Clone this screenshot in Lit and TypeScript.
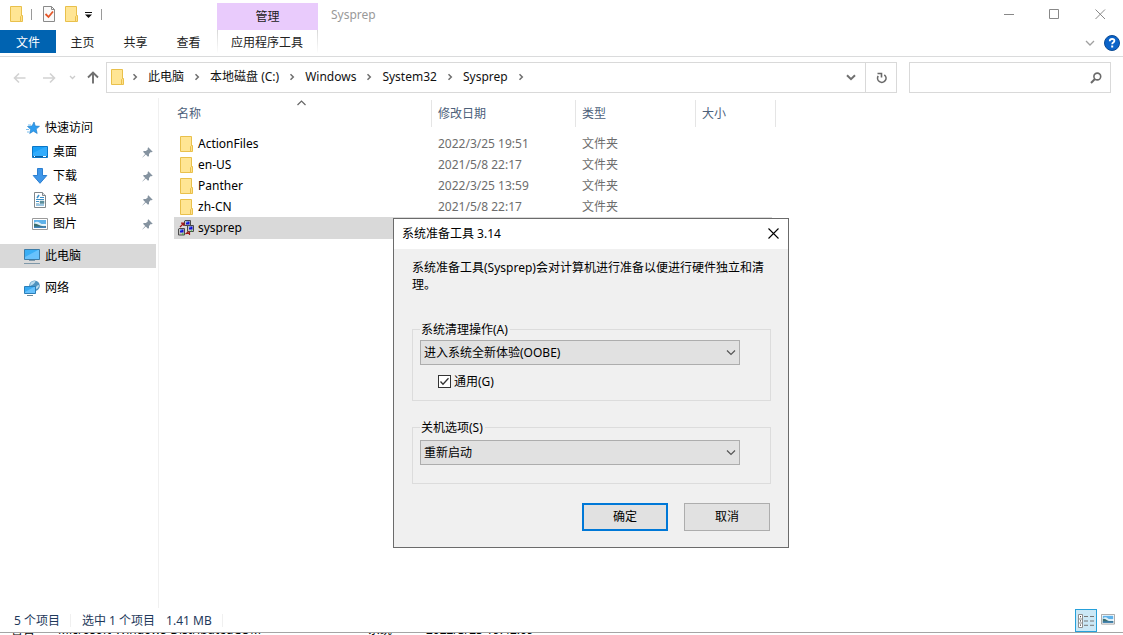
import { LitElement, html, css, svg } from "lit";
import { customElement, state } from "lit/decorators.js";
import { classMap } from "lit/directives/class-map.js";

const folderIcon = html`
  <svg class="icon" width="14" height="16" viewBox="-1 0 14 16" aria-hidden="true">
    <path d="M.5 .5h11v15H.5z" fill="#ffe594" stroke="#e9c04b" />
    <path d="M10.500 15.500v-5l1-1h1v6z" fill="#ffe08a" stroke="#e9c04b" />
  </svg>`;

const crumbChevron = html`
  <svg class="chev" width="6" height="8" viewBox="0 0 6 8" aria-hidden="true">
    <path d="M1.5 1.2L4.3 4L1.5 6.8" fill="none" stroke="#6e6e6e" stroke-width="1.5" />
  </svg>`;

const pictureShape = svg`
  <path d="M.5 2.500h15v11H.5z" fill="#fff" stroke="#9a9a9a" />
  <path d="M2 4h12v4H2z" fill="#5fb2ea" />
  <path d="M2 7q3-2.500 6 0t6 1v4H2z" fill="#dff0fa" />
  <path d="M2 7.500q3 0 5 1.500t7 1v2H2z" fill="#3d6f6d" />
  <path d="M2 10.500h12v1.500H2z" fill="#3f83bd" />`;

const sideIcons = {
  star: html`<svg class="icon" width="16" height="16" viewBox="-1 0 16 16" aria-hidden="true">
    <path d="M9 2l1.300 4 4.200.300-3.300 2.800 1 4.400-3.800-2.300L4.700 13.500l1-4.200L2.500 6.500l4.500-.500z" fill="#2f9df0" stroke="#1b78c4" stroke-width=".6" />
    <path d="M1 9.500h3M2 12h2.500M3 5h3" stroke="#7cc0ee" stroke-width="1" />
  </svg>`,
  desktop: html`<svg class="icon" width="16" height="16" viewBox="0 0 16 16" aria-hidden="true">
    <path d="M.5 2.500h15v11H.5z" fill="#19a0f7" stroke="#0b76c6" />
    <path d="M1 9L13 3h2v9H1z" fill="#42b4ff" opacity=".6" />
    <path d="M1 12.500h14" stroke="#0c5e9f" />
    <path d="M2 12.500h1M11 12.500h3" stroke="#fff" />
  </svg>`,
  download: html`<svg class="icon" width="16" height="16" viewBox="0 0 16 16" aria-hidden="true">
    <path d="M5.500 .5h5v7h4.300L8 15.300 1.200 7.500h4.300z" fill="#3f96e8" stroke="#2b7fd1" />
  </svg>`,
  doc: html`<svg class="icon" width="16" height="16" viewBox="0 0 16 16" aria-hidden="true">
    <path d="M2.500 .5h8l3 3v12h-11z" fill="#fff" stroke="#81878b" />
    <path d="M10.500 .5v3h3" fill="#dfe3e5" stroke="#81878b" />
    <path d="M4 7.500h8M8 5.500h4M4 9.500h3M4 13h8" stroke="#3b8fc8" />
    <path d="M5 6l2-3" stroke="#3b8fc8" stroke-width="1.500" />
    <path d="M8 9h4v2.500H8zM4 11.500h3" fill="#5b8e9c" stroke="#5b8e9c" stroke-width=".5" />
  </svg>`,
  picture: html`<svg class="icon" width="16" height="16" viewBox="0 0 16 16" aria-hidden="true">${pictureShape}</svg>`,
  pc: html`<svg class="icon" width="16" height="16" viewBox="0 0 16 16" aria-hidden="true">
    <path d="M.5 1.500h15v10H.5z" fill="#39aef5" stroke="#3c7ca8" />
    <path d="M1 9L14 2h1v9H1z" fill="#7ccbff" opacity=".7" />
    <path d="M5 12.500h6M0 15.500h16" stroke="#7e97a8" />
  </svg>`,
  network: html`<svg class="icon" width="16" height="16" viewBox="0 0 16 16" aria-hidden="true">
    <circle cx="10.500" cy="5.800" r="5.300" fill="#4f93bf" />
    <path d="M6.500 3q2-2.500 5-2-1 3-2.500 3.500T6 6zM12 7q1-2 3-2 0 3-3 4z" fill="#b9dcef" />
    <path d="M.5 6.500h11v7H.5z" fill="#37aaf3" stroke="#2c7fb8" />
    <path d="M1 12l9-5h1v6H1z" fill="#7ccbff" opacity=".7" />
    <path d="M3 15.500h6" stroke="#6b8796" />
  </svg>`,
};

const pinIcon = html`
  <svg class="pin" width="11" height="11" viewBox="0 0 11 11" aria-hidden="true">
    <path d="M6.300 .3L10.700 4.700 9.700 5.300 8.800 5 7 7v2L6 9.800 3.800 7.400.6 10.400.4 10.200 3.200 6.900 1 4.800 1.900 4h2l2-1.800-.3-1z" fill="#8593a0" />
  </svg>`;

const sysprepIcon = html`
  <svg class="icon" width="16" height="16" viewBox="0 0 16 16" aria-hidden="true">
    <path d="M7 .5h5.500v5H6.500v-4.500zM10 5.500h5.500v6H9.500v-5.500zM1 8.500h5.500v6.500H.5V9z" fill="#c4c4c4" stroke="#4a4a4a" />
    <path d="M8 1.500h3.500v3H8zM11 6.500h3.500v3H11zM2 9.500h3.500v3H2z" fill="#1414d8" />
    <path d="M8 1.500h1.500v1H8zM11 6.500h1.500v1H11zM2 9.500h1.500v1H2z" fill="#8fe0ff" />
    <path d="M2 7L5.500 3.500M3 3.200h2.800V6M7.500 14L11 11.500M8 13.500h4M11.500 12v3" stroke="#a01818" stroke-width="1.200" fill="none" />
    <path d="M4 14h1.500M13 11h1" stroke="#20c020" />
  </svg>`;

interface FileRow {
  name: string;
  date: string;
  type: string;
  app?: boolean;
}

const files: FileRow[] = [
  { name: "ActionFiles", date: "2022/3/25 19:51", type: "文件夹" },
  { name: "en-US", date: "2021/5/8 22:17", type: "文件夹" },
  { name: "Panther", date: "2022/3/25 13:59", type: "文件夹" },
  { name: "zh-CN", date: "2021/5/8 22:17", type: "文件夹" },
  { name: "sysprep", date: "", type: "", app: true },
];

const shared = css`
  * { box-sizing: border-box; }
  button, input, select { font: inherit; color: inherit; margin: 0; padding: 0; border: 0; border-radius: 0; background: none; }
  a { color: inherit; text-decoration: none; }
  svg { display: block; flex: none; }
`;

@customElement("explorer-ribbon")
class ExplorerRibbon extends LitElement {
  static styles = [shared, css`
    :host { display: block; border-bottom: 1px solid #dadbdc; }
    .bar { display: grid; grid-template-columns: 217px 101px 1fr auto; height: 56px; grid-template-rows: 30px 26px; }
    .quick { display: flex; align-items: center; padding: 0 0 2px 9px; }
    .rule { width: 1px; height: 11px; background: #9a9a9a; margin: 0 10px 0 8px; }
    .quick .doc { margin-right: 8px; }
    .more { width: 9px; height: 16px; margin-left: 6px; padding-top: 2px; display: grid; place-items: center; }
    .context { background: #e9cbfc; margin-top: 3px; display: grid; place-items: center; color: #222; }
    .title { padding-left: 13px; line-height: 30px; color: #999; }
    .window { display: flex; }
    .window button { width: 46px; height: 28px; display: grid; place-items: center; }
    .tabs { display: flex; align-items: flex-start; }
    .tabs button { height: 23px; width: 53px; padding-top: 2px; color: #222; }
    .tabs .file { width: 56px; background: #0063b1; color: #fff; }
    .tool { color: #222; border: 1px solid; border-width: 0 1px; border-image: linear-gradient(#d5d5d5, #fff) 1; height: 23px; }
    .tool button { width: 98px; height: 23px; padding-top: 2px; }
    .help { grid-column: 4; display: flex; justify-content: flex-end; align-items: center; gap: 9px; padding-right: 3px; }
  `];

  render() {
    return html`
      <div class="bar">
        <div class="quick">
          ${folderIcon}
          <span class="rule"></span>
          <svg class="doc" width="14" height="16" viewBox="0 0 14 16" aria-hidden="true">
            <path d="M1.500 .5h8l3 3v12h-11z" fill="#fafafa" stroke="#8a8a8a" />
            <path d="M9.500 .5v3h3" fill="none" stroke="#8a8a8a" />
            <path d="M3.500 8l3 3 4.500-5.500" fill="none" stroke="#e4572a" stroke-width="1.800" />
          </svg>
          ${folderIcon}
          <button class="more" aria-label="自定义快速访问工具栏">
            <svg width="8" height="6" viewBox="0 0 8 6"><path d="M0 0h7v1H0zM0 2.500h7L3.500 6z" fill="#111" /></svg>
          </button>
          <span class="rule"></span>
        </div>
        <div class="context">管理</div>
        <div class="title">Sysprep</div>
        <div class="window">
          <button aria-label="最小化"><svg width="11" height="11" viewBox="0 0 11 11"><path d="M1 5.500h10" stroke="#888" /></svg></button>
          <button aria-label="最大化"><svg width="11" height="11" viewBox="0 0 11 11"><path d="M.5 .5h9v9h-9z" fill="none" stroke="#888" /></svg></button>
          <button aria-label="关闭"><svg width="11" height="11" viewBox="0 0 11 11"><path d="M.5 .5l9.500 9.500M10 .5L.5 10" stroke="#888" /></svg></button>
        </div>
        <div class="tabs">
          <button class="file">文件</button>
          <button>主页</button>
          <button>共享</button>
          <button>查看</button>
        </div>
        <div class="tool"><button>应用程序工具</button></div>
        <div class="help">
          <svg width="10" height="6" viewBox="0 0 10 6" aria-hidden="true"><path d="M1 1l4 4 4-4" fill="none" stroke="#a0a0a0" stroke-width="1.300" /></svg>
          <button aria-label="帮助">
            <svg width="16" height="16" viewBox="0 0 16 16">
              <circle cx="8" cy="8" r="7.500" fill="#0a63c9" stroke="#0b4a94" />
              <path d="M5.800 6.200V5.800Q5.900 4 8.100 4q2.300 0 2.300 1.800 0 1-1.200 1.700-1 .6-1 1.700" fill="none" stroke="#fff" stroke-width="1.800" />
              <path d="M7.200 10.500h2v2h-2z" fill="#fff" />
            </svg>
          </button>
        </div>
      </div>`;
  }
}

@customElement("explorer-address")
class ExplorerAddress extends LitElement {
  static styles = [shared, css`
    :host { display: flex; align-items: center; padding: 5px 12px 5px 0; }
    .nav { display: grid; grid-template-columns: 38px 22px 24px 18px; width: 106px; justify-items: center; align-items: center; }
    .box { flex: 1; display: flex; border: 1px solid #d9d9d9; height: 31px; color: #111; }
    .crumbs { flex: 1; display: flex; align-items: center; padding: 0 0 1px 3px; }
    .crumbs > .icon { margin-right: -2px; }
    .chev { margin: 0 10px; }
    .drop { width: 28px; display: grid; place-items: center; }
    .refresh { width: 31px; border-left: 1px solid #d9d9d9; display: grid; place-items: center; }
    .search { width: 202px; margin-left: 12px; display: flex; align-items: center; border: 1px solid #d9d9d9; height: 31px; padding-right: 8px; }
    .search input { flex: 1; min-width: 0; height: 29px; padding-left: 8px; outline: 0; }
  `];

  render() {
    const crumbs = ["此电脑", "本地磁盘 (C:)", "Windows", "System32", "Sysprep"];
    return html`
      <div class="nav">
        <button aria-label="返回"><svg width="13" height="12" viewBox="0 0 13 12"><path d="M12.500 6H1.500M6 1.500L1.500 6 6 10.500" fill="none" stroke="#d2d2d2" stroke-width="1.600" /></svg></button>
        <button aria-label="前进"><svg width="13" height="12" viewBox="0 0 13 12"><path d="M0 6h11.500M7 1.500L11.500 6 7 10.500" fill="none" stroke="#d2d2d2" stroke-width="1.600" /></svg></button>
        <button aria-label="最近浏览的位置"><svg width="7" height="5" viewBox="0 0 7 5"><path d="M1 1l2.500 2.500L6 1" fill="none" stroke="#ccc" stroke-width="1.300" /></svg></button>
        <button aria-label="上移"><svg width="12" height="13" viewBox="0 0 12 13"><path d="M6 12.500V2M1 6.500L6 1.500l5 5" fill="none" stroke="#707070" stroke-width="1.900" /></svg></button>
      </div>
      <div class="box">
        <nav class="crumbs" aria-label="地址">
          ${folderIcon}${crumbChevron}
          ${crumbs.map((c) => html`<a href="#">${c}</a>${crumbChevron}`)}
        </nav>
        <button class="drop" aria-label="以前的位置"><svg width="10" height="7" viewBox="0 0 10 7"><path d="M1 1.200l4 4 4-4" fill="none" stroke="#707070" stroke-width="2" /></svg></button>
        <button class="refresh" aria-label="刷新"><svg width="11" height="12" viewBox="0 0 11 12"><path d="M8.300 2.800A4.200 4.200 0 1 1 2.200 4M1.500 1.500h4V5.500" fill="none" stroke="#6a6a6a" stroke-width="1.600" /></svg></button>
      </div>
      <div class="search">
        <input type="search" aria-label="搜索 Sysprep" />
        <svg width="12" height="12" viewBox="0 0 12 12" aria-hidden="true"><circle cx="7.300" cy="4.500" r="3.400" fill="none" stroke="#6a6a6a" stroke-width="1.600" /><path d="M4.900 7L1 11" stroke="#6a6a6a" stroke-width="2" /></svg>
      </div>`;
  }
}

@customElement("explorer-sidebar")
class ExplorerSidebar extends LitElement {
  static styles = [shared, css`
    :host { display: flex; flex-direction: column; gap: 8px; width: 159px; padding: 18px 2px 0 0; border-right: 1px solid #f0f0f0; }
    .row { display: flex; align-items: center; gap: 5px; height: 24px; padding: 0 3px 0 24px; color: #000; }
    .sub { padding-left: 32px; }
    .current { background: #d9d9d9; }
    .pin { margin-left: auto; }
  `];

  render() {
    const quick: [keyof typeof sideIcons, string][] = [
      ["desktop", "桌面"],
      ["download", "下载"],
      ["doc", "文档"],
      ["picture", "图片"],
    ];
    return html`
      <div>
        <a class="row" href="#">${sideIcons.star}<span>快速访问</span></a>
        ${quick.map(([icon, label]) => html`<a class="row sub" href="#">${sideIcons[icon]}<span>${label}</span>${pinIcon}</a>`)}
      </div>
      <a class="row current" href="#">${sideIcons.pc}<span>此电脑</span></a>
      <a class="row" href="#">${sideIcons.network}<span>网络</span></a>`;
  }
}

@customElement("explorer-files")
class ExplorerFiles extends LitElement {
  static styles = [shared, css`
    :host { display: block; padding: 2px 0 0 15px; }
    table { border-collapse: separate; border-spacing: 0; table-layout: fixed; width: 602px; }
    .c-name { width: 258px; }
    .c-date { width: 144px; }
    .c-type { width: 120px; }
    .c-size { width: 80px; }
    th { position: relative; height: 27px; padding: 0 0 0 6px; text-align: left; font-weight: 400; color: #4c607a; border-right: 1px solid #e5e5e5; }
    th:first-child { padding-left: 3px; }
    .sort { position: absolute; top: 0; left: calc(50% - 6px); }
    .gap td { height: 6px; }
    td { height: 21px; padding: 0 0 0 6px; color: #6d6d6d; white-space: nowrap; }
    td:first-child { padding-left: 4px; color: #000; }
    .name { display: flex; align-items: center; gap: 4px; }
    .name .icon { width: 16px; }
    .selected td { height: 22px; background: #d9d9d9; }
    .selected td:last-child { border-right: 4px solid transparent; background-clip: padding-box; }
  `];

  render() {
    return html`
      <table>
        <colgroup><col class="c-name" /><col class="c-date" /><col class="c-type" /><col class="c-size" /></colgroup>
        <thead>
          <tr>
            <th>名称<svg class="sort" width="9" height="6" viewBox="0 0 9 6" aria-hidden="true"><path d="M.5 5l4-4 4 4" fill="none" stroke="#666" stroke-width="1.200" /></svg></th>
            <th>修改日期</th><th>类型</th><th>大小</th>
          </tr>
        </thead>
        <tbody>
          <tr class="gap" aria-hidden="true"><td colspan="4"></td></tr>
          ${files.map((f) => html`
            <tr class=${classMap({ selected: !!f.app })}>
              <td><div class="name">${f.app ? sysprepIcon : folderIcon}<span>${f.name}</span></div></td>
              <td>${f.date}</td><td>${f.type}</td><td></td>
            </tr>`)}
        </tbody>
      </table>`;
  }
}

@customElement("explorer-status")
class ExplorerStatus extends LitElement {
  static styles = [shared, css`
    :host { display: flex; align-items: center; height: 23px; padding: 0 4px 0 14px; color: #1e395b; }
    .part { display: flex; gap: 11px; padding-right: 10px; margin-right: 11px; border-right: 1px solid #f0f0f0; line-height: 13px; }
    .views { margin-left: auto; display: flex; }
    .views button { width: 22px; height: 23px; display: grid; place-items: center; }
    .views .on { background: #cbe8f6; border: 1px solid #26a0da; }
  `];

  render() {
    return html`
      <span class="part">5 个项目</span>
      <span class="part"><span>选中 1 个项目</span><span>1.41 MB</span></span>
      <div class="views">
        <button class="on" aria-label="详细信息">
          <svg width="16" height="14" viewBox="0 0 16 14">
            <path d="M.5 .5h4v13h-4zM.5 5h4M.5 9h4" fill="#fff" stroke="#8f8f8f" />
            <path d="M2 2h1v1.300H2zM2 6.300h1v1.300H2zM2 10.500h1v1.300H2z" fill="#444" />
            <path d="M6 2.500h4M12 2.500h4M6 7h4M12 7h4M6 11.300h4M12 11.300h4" stroke="#777" />
          </svg>
        </button>
        <button aria-label="大缩略图"><svg width="14" height="14" viewBox="0 2 16 16">${pictureShape}</svg></button>
      </div>`;
  }
}

@customElement("sysprep-dialog")
class SysprepDialog extends LitElement {
  @state() private generalize = true;

  static styles = [shared, css`
    :host { display: block; width: 396px; border: 1px solid #6b6b6b; background: #f0f0f0; color: #000; }
    .head { display: flex; align-items: center; height: 30px; background: #fff; padding-left: 8px; }
    .head span { flex: 1; }
    .head button { width: 30px; height: 28px; align-self: flex-start; display: grid; place-items: center; }
    .body { padding: 10px 17px 16px 18px; }
    p { margin: 0 0 27px; line-height: 17px; }
    fieldset { margin: 0; border: 1px solid #dcdcdc; min-width: 0; }
    legend { line-height: 16px; padding: 2px 2px 0 1px; }
    .cleanup { padding: 2px 30px 10px 7px; margin-bottom: 17px; }
    .shutdown { padding: 4px 30px 18px 7px; margin-bottom: 19px; }
    .combo { position: relative; }
    .combo select { appearance: none; display: block; width: 100%; height: 25px; padding: 0 24px 0 3px; background: #e1e1e1; border: 1px solid #adadad; }
    .combo svg { position: absolute; right: 4px; top: 10px; pointer-events: none; }
    .check { display: flex; align-items: center; gap: 3px; margin: 8px 0 0 18px; line-height: 17px; }
    .tick { position: relative; }
    .tick input { appearance: none; display: block; width: 13px; height: 13px; border: 1px solid #333; background: #fff; }
    .tick svg { position: absolute; inset: 0; pointer-events: none; }
    .actions { display: flex; justify-content: flex-end; gap: 16px; padding-right: 1px; }
    .actions button { width: 86px; height: 28px; background: #e1e1e1; border: 1px solid #adadad; }
    .actions .ok { border: 2px solid #0078d7; }
  `];

  private arrow = html`<svg width="10" height="6" viewBox="0 0 10 6" aria-hidden="true"><path d="M1 .5l4 4 4-4" fill="none" stroke="#555" stroke-width="1.200" /></svg>`;

  private toggle(e: Event) {
    this.generalize = (e.target as HTMLInputElement).checked;
  }

  render() {
    return html`
      <div class="head">
        <span>系统准备工具 3.14</span>
        <button aria-label="关闭"><svg width="11" height="11" viewBox="0 0 11 11"><path d="M.5 .5l10 10M10.500 .5l-10 10" stroke="#000" stroke-width="1.100" /></svg></button>
      </div>
      <div class="body">
        <p>系统准备工具(Sysprep)会对计算机进行准备以便进行硬件独立和清理。</p>
        <fieldset class="cleanup">
          <legend>系统清理操作(A)</legend>
          <div class="combo">
            <select aria-label="系统清理操作(A)"><option>进入系统全新体验(OOBE)</option></select>
            ${this.arrow}
          </div>
          <label class="check">
            <span class="tick">
              <input type="checkbox" .checked=${this.generalize} @change=${this.toggle} />
              ${this.generalize ? html`<svg width="13" height="13" viewBox="0 0 13 13" aria-hidden="true"><path d="M2.500 6.500L5 9.200l5.500-6" fill="none" stroke="#333" stroke-width="1.300" /></svg>` : ""}
            </span>
            通用(G)
          </label>
        </fieldset>
        <fieldset class="shutdown">
          <legend>关机选项(S)</legend>
          <div class="combo">
            <select aria-label="关机选项(S)"><option>重新启动</option></select>
            ${this.arrow}
          </div>
        </fieldset>
        <div class="actions">
          <button class="ok">确定</button>
          <button>取消</button>
        </div>
      </div>`;
  }
}

@customElement("app-root")
class AppRoot extends LitElement {
  static styles = [shared, css`
    :host {
      position: relative;
      display: flex;
      flex-direction: column;
      height: 100vh;
      overflow: hidden;
      background: #fff;
      font: 12px/16px "Noto Sans", "Noto Sans CJK SC", sans-serif;
    }
    .main { flex: 1; min-height: 0; display: grid; grid-template-columns: 159px 1fr; }
    .behind { height: 3px; border-top: 1px solid #a5a5a5; overflow: hidden; display: grid; grid-template-columns: 47px 310px 58px 1fr; padding-left: 11px; align-content: end; line-height: 10px; color: #000; white-space: nowrap; }
    .dialog { position: absolute; left: 393px; top: 218px; }
    explorer-sidebar { margin-bottom: 1px; }
  `];

  render() {
    return html`
      <explorer-ribbon></explorer-ribbon>
      <explorer-address></explorer-address>
      <div class="main">
        <explorer-sidebar></explorer-sidebar>
        <explorer-files></explorer-files>
      </div>
      <explorer-status></explorer-status>
      <div class="behind">
        <span>警告</span><span>Microsoft-Windows-DistributedCOM</span><span>系统</span><span>2022/3/25 19:42:09</span>
      </div>
      <sysprep-dialog class="dialog" role="dialog" aria-label="系统准备工具 3.14"></sysprep-dialog>`;
  }
}
